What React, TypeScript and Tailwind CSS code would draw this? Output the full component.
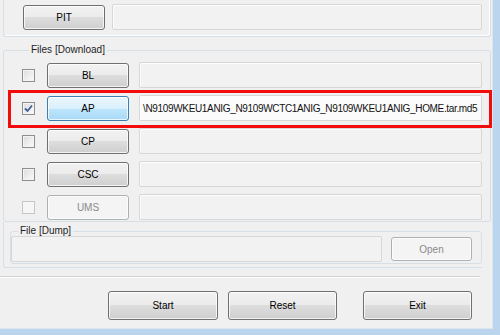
import type { ReactNode } from "react";

const FONT = { fontFamily: '"Liberation Sans", Arial, sans-serif' };

type ButtonVariant = "normal" | "hot" | "disabled";

function WinButton({
  children,
  variant = "normal",
  className = "",
}: {
  children: ReactNode;
  variant?: ButtonVariant;
  className?: string;
}) {
  const look =
    variant === "hot"
      ? "border-[#3c7fb1] bg-[linear-gradient(to_bottom,#eaf6fd_0%,#d9f0fc_50%,#bee6fd_50%,#a7d9f5_100%)] text-black"
      : variant === "disabled"
        ? "border-[#adb2b5] bg-[#f4f4f4] text-[#8a8a8a]"
        : "border-[#707070] bg-[linear-gradient(to_bottom,#f2f2f2_0%,#ebebeb_50%,#dddddd_50%,#cfcfcf_100%)] text-black";
  return (
    <div
      className={`flex shrink-0 items-center justify-center rounded-[3px] border text-[10px] shadow-[inset_0_0_0_1px_rgba(255,255,255,0.75)] ${look} ${className}`}
    >
      {children}
    </div>
  );
}

function TextBox({ children, active = false }: { children?: ReactNode; active?: boolean }) {
  return (
    <div
      className={`flex h-[26px] min-w-0 flex-1 items-center overflow-hidden whitespace-nowrap rounded-[2px] border border-[#d7d7d7] pl-[3px] shadow-[inset_1px_1px_0_#fdfdfd] ${
        active ? "bg-[#fbfbfb]" : "bg-[#f2f2f2]"
      }`}
    >
      {children}
    </div>
  );
}

function CheckBox({ checked = false, disabled = false }: { checked?: boolean; disabled?: boolean }) {
  return (
    <div
      className={`flex h-[13px] w-[13px] shrink-0 items-center justify-center border ${
        disabled
          ? "border-[#c6c6c6] bg-[#f6f6f6]"
          : "border-[#8e8f8f] bg-[linear-gradient(135deg,#dcdcdc,#fbfbfb)] shadow-[inset_0_0_0_1px_#f4f4f4]"
      }`}
    >
      {checked ? (
        <svg width="9" height="9" viewBox="0 0 9 9">
          <path d="M1 4.5 L3.5 7 L8 1.5" fill="none" stroke="#3d5a99" strokeWidth="1.8" />
        </svg>
      ) : null}
    </div>
  );
}

const files = [
  { name: "BL" },
  { name: "AP", checked: true, path: "\\N9109WKEU1ANIG_N9109WCTC1ANIG_N9109WKEU1ANIG_HOME.tar.md5" },
  { name: "CP" },
  { name: "CSC" },
  { name: "UMS", disabled: true },
];

export default function App() {
  return (
    <div
      style={FONT}
      className="h-[335px] w-[500px] overflow-hidden border-r-[7px] border-b-[6px] border-[#bcd5ee] bg-[#f0f0f0] text-black"
    >
      <div className="flex h-full flex-col border-r border-b border-[#dfe5ec]">
        {/* PIT group (top edge cut off) */}
        <div className="mr-[1px] ml-[3px] h-[37px] shrink-0 rounded-b-[3px] border-x border-b border-[#d5dfe5] pt-[4px] pr-[8px] pl-[19px] shadow-[inset_-1px_-1px_0_#fff]">
          <div className="flex items-center gap-[7px]">
            <WinButton className="h-[25px] w-[82px]">PIT</WinButton>
            <TextBox />
          </div>
        </div>

        {/* Files [Download] */}
        <fieldset className="mt-[7px] mr-[1px] ml-[3px] shrink-0 rounded-[3px] border border-[#d5dfe5] pt-[6px] pr-[8px] pb-[1px] pl-[18px]">
          <legend className="ml-[7px] px-[2px] text-[10px] leading-[12px] text-[#1e1e1e]">Files [Download]</legend>
          <div className="flex flex-col gap-[7px]">
            {files.map((f) => (
              <div key={f.name} className="relative flex h-[26px] items-center">
                {f.name === "AP" ? (
                  <div className="pointer-events-none absolute top-[-5px] right-[-10px] bottom-[-7px] left-[-14px] border-[3px] border-[#f20d0d]" />
                ) : null}
                <CheckBox checked={f.checked} disabled={f.disabled} />
                <WinButton
                  variant={f.name === "AP" ? "hot" : f.disabled ? "disabled" : "normal"}
                  className="ml-[12px] h-[25px] w-[82px]"
                >
                  {f.name}
                </WinButton>
                <div className="ml-[10px] flex min-w-0 flex-1">
                  <TextBox active={!!f.path}>
                    {f.path ? (
                      <span className="text-[10px] tracking-[-0.34px] text-[#111]">{f.path}</span>
                    ) : null}
                  </TextBox>
                </div>
              </div>
            ))}
          </div>
        </fieldset>

        {/* File [Dump] */}
        <div className="mr-[10px] ml-[3px] h-[46px] shrink-0 rounded-bl-[3px] border-b border-l border-[#d5dfe5] pl-[6px]">
          <fieldset className="mt-[4px] rounded-[3px] border border-[#d5dfe5] pr-[9px] pb-[1px]">
            <legend className="ml-[7px] px-[2px] text-[10px] leading-[10px] text-[#1e1e1e]">File [Dump]</legend>
            <div className="flex items-center gap-[9px]">
              <div className="h-[26px] flex-1 rounded-[2px] border border-[#d7d7d7] bg-[#f2f2f2]" />
              <WinButton variant="disabled" className="h-[24px] w-[81px]">
                Open
              </WinButton>
            </div>
          </fieldset>
        </div>

        <div className="mt-[8px] mr-[12px] h-[2px] shrink-0 border-t border-b border-t-[#d2d2d2] border-b-white" />

        <div className="mt-[13px] flex shrink-0 pl-[108px]">
          <WinButton className="h-[29px] w-[110px]">Start</WinButton>
          <WinButton className="ml-[10px] h-[29px] w-[109px]">Reset</WinButton>
          <WinButton className="ml-[26px] h-[29px] w-[109px]">Exit</WinButton>
        </div>
      </div>
    </div>
  );
}
